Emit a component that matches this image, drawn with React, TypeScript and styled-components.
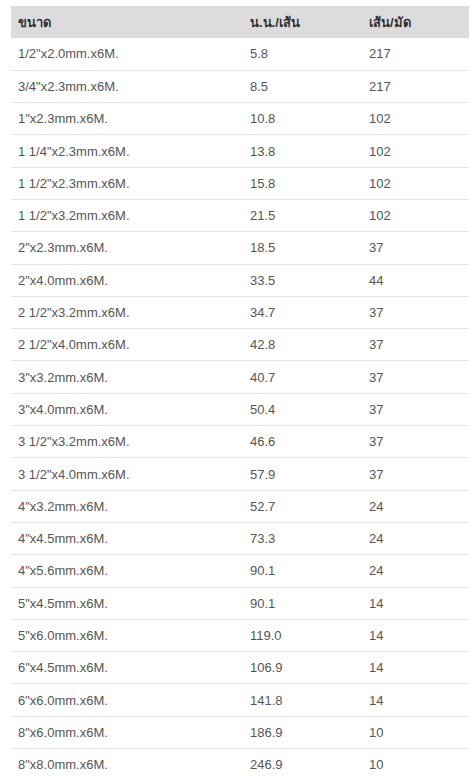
import styled, { createGlobalStyle } from "styled-components";

const GlobalStyle = createGlobalStyle`
  body {
    margin: 0;
    background: #ffffff;
    font-family: "Liberation Sans", Arial, sans-serif;
  }
`;

const rows: [string, string, string][] = [
  ['1/2"x2.0mm.x6M.', "5.8", "217"],
  ['3/4"x2.3mm.x6M.', "8.5", "217"],
  ['1"x2.3mm.x6M.', "10.8", "102"],
  ['1 1/4"x2.3mm.x6M.', "13.8", "102"],
  ['1 1/2"x2.3mm.x6M.', "15.8", "102"],
  ['1 1/2"x3.2mm.x6M.', "21.5", "102"],
  ['2"x2.3mm.x6M.', "18.5", "37"],
  ['2"x4.0mm.x6M.', "33.5", "44"],
  ['2 1/2"x3.2mm.x6M.', "34.7", "37"],
  ['2 1/2"x4.0mm.x6M.', "42.8", "37"],
  ['3"x3.2mm.x6M.', "40.7", "37"],
  ['3"x4.0mm.x6M.', "50.4", "37"],
  ['3 1/2"x3.2mm.x6M.', "46.6", "37"],
  ['3 1/2"x4.0mm.x6M.', "57.9", "37"],
  ['4"x3.2mm.x6M.', "52.7", "24"],
  ['4"x4.5mm.x6M.', "73.3", "24"],
  ['4"x5.6mm.x6M.', "90.1", "24"],
  ['5"x4.5mm.x6M.', "90.1", "14"],
  ['5"x6.0mm.x6M.', "119.0", "14"],
  ['6"x4.5mm.x6M.', "106.9", "14"],
  ['6"x6.0mm.x6M.', "141.8", "14"],
  ['8"x6.0mm.x6M.', "186.9", "10"],
  ['8"x8.0mm.x6M.', "246.9", "10"],
];

const App = () => {
  return (
    <>
      <GlobalStyle />
      <Wrapper>
        <Table>
          <colgroup>
            <col style={{ width: 232 }} />
            <col style={{ width: 119 }} />
            <col />
          </colgroup>
          <thead>
            <tr>
              <Th>ขนาด</Th>
              <Th>น.น./เส้น</Th>
              <Th>เส้น/มัด</Th>
            </tr>
          </thead>
          <tbody>
            {rows.map((r) => (
              <Row key={r[0]}>
                <Td>{r[0]}</Td>
                <Td>{r[1]}</Td>
                <Td>{r[2]}</Td>
              </Row>
            ))}
          </tbody>
        </Table>
      </Wrapper>
    </>
  );
};

export default App;

const Wrapper = styled.div`
  padding: 6px 6px 0 11px;
`;

const Table = styled.table`
  width: 458px;
  border-collapse: collapse;
  table-layout: fixed;
  font-size: 13px;
`;

const Th = styled.th`
  background: #dcdcdc;
  color: #333;
  font-weight: bold;
  text-align: left;
  height: 32px;
  padding: 0 7px;
  box-sizing: border-box;
`;

const Row = styled.tr`
  border-bottom: 1px solid #e6e6e6;
  &:last-child {
    border-bottom: none;
  }
`;

const Td = styled.td`
  color: #555;
  height: 32.3px;
  padding: 0 7px;
  box-sizing: border-box;
`;
